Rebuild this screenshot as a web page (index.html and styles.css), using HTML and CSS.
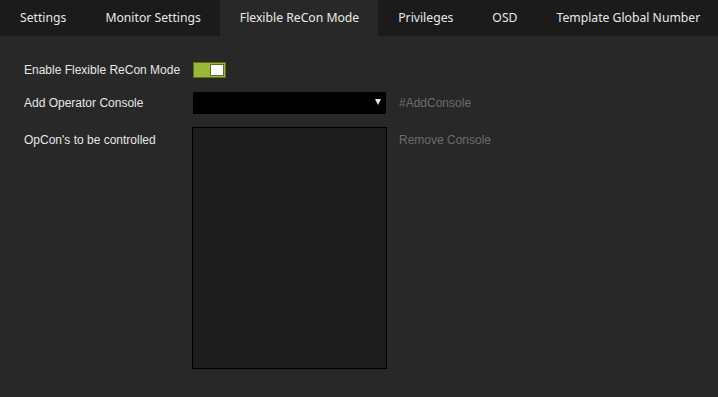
FILE: index.html
```html
<!DOCTYPE html>
<html lang="en">
<head>
    <meta charset="UTF-8">
    <title>Flexible ReCon Mode</title>
    <link rel="stylesheet" href="styles.css">
</head>
<body>
    <nav class="tabs">
        <div class="tab">Settings</div>
        <div class="tab">Monitor Settings</div>
        <div class="tab active">Flexible ReCon Mode</div>
        <div class="tab">Privileges</div>
        <div class="tab">OSD</div>
        <div class="tab">Template Global Number</div>
    </nav>
    <div class="panel">
        <div class="row row-toggle">
            <label class="label">Enable Flexible ReCon Mode</label>
            <div class="toggle"><span class="knob"></span></div>
        </div>
        <div class="row row-select">
            <label class="label">Add Operator Console</label>
            <div class="select"><span class="arrow"></span></div>
            <span class="hint">#AddConsole</span>
        </div>
        <div class="row row-list">
            <label class="label">OpCon's to be controlled</label>
            <div class="listbox"></div>
            <span class="hint hint-list">Remove Console</span>
        </div>
    </div>
</body>
</html>
```

FILE: styles.css
```css
body {
    margin: 0;
    background: #282828;
    font-family: 'Liberation Sans', Arial, sans-serif;
    color: #e6e6e6;
    height: 397px;
    overflow: hidden;
}
.tabs {
    display: flex;
    height: 36px;
    background: #1b1b1b;
}
.tab {
    flex-shrink: 0;
    white-space: nowrap;
    padding: 0 19px 0 20px;
    line-height: 35px;
    font-family: 'Noto Sans', sans-serif;
    font-size: 12.2px;
    color: #e8e8e8;
}
.tab.active {
    background: #282828;
}
.panel {
    padding: 26px 0 0 24px;
}
.row {
    display: flex;
    align-items: flex-start;
}
.label {
    width: 169px;
    font-size: 12px;
    color: #e6e6e6;
}
.row-toggle {
    align-items: center;
    height: 16px;
}
.toggle {
    width: 30px;
    height: 14px;
    background: #98b83a;
    border: 1px solid #5c7020;
    display: flex;
    justify-content: flex-end;
    align-items: center;
    padding-right: 1px;
}
.knob {
    width: 12px;
    height: 10px;
    background: #fff;
    border: 1px solid #5c7020;
}
.row-select {
    margin-top: 14px;
    align-items: center;
}
.select {
    width: 193px;
    height: 22px;
    background: #000;
    position: relative;
}
.arrow {
    position: absolute;
    right: 5px;
    top: 7px;
    border-left: 3px solid transparent;
    border-right: 3px solid transparent;
    border-top: 6px solid #e8e8e8;
}
.hint {
    margin-left: 13px;
    font-size: 12px;
    color: #6b6b6b;
}
.row-list {
    margin-top: 13px;
}
.row-list .label {
    width: 168px;
    margin-top: 6px;
}
.listbox {
    width: 193px;
    height: 240px;
    background: #1c1c1c;
    border: 1px solid #000;
}
.hint-list {
    margin-top: 6px;
    margin-left: 12px;
}
```
